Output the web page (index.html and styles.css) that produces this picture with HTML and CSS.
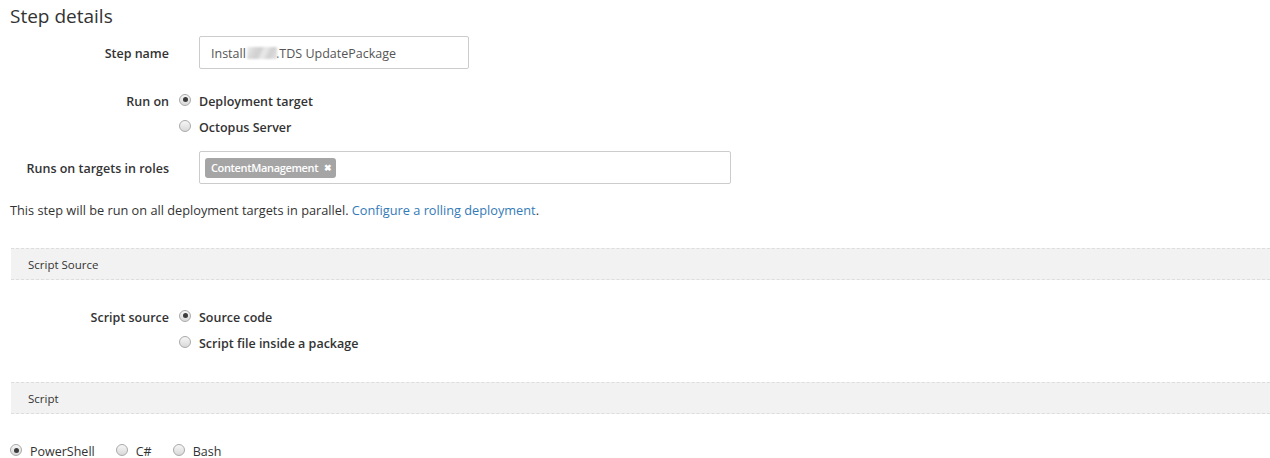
FILE: index.html
```html
<!DOCTYPE html>
<html>
<head>
<meta charset="utf-8">
<link rel="stylesheet" href="styles.css">
</head>
<body>
<div class="page">
  <h2 class="title">Step details</h2>

  <div class="row row-name">
    <div class="label">Step name</div>
    <div class="control control-input">
      <div class="input">Install <span class="blur"></span>.TDS UpdatePackage</div>
    </div>
  </div>

  <div class="row row-runon">
    <div class="label label-radio">Run on</div>
    <div class="control radios">
      <div class="radio"><span class="dot checked"></span><span class="rlabel">Deployment target</span></div>
      <div class="radio"><span class="dot"></span><span class="rlabel">Octopus Server</span></div>
    </div>
  </div>

  <div class="row row-roles">
    <div class="label">Runs on targets in roles</div>
    <div class="control control-input">
      <div class="input input-tags"><span class="tag">ContentManagement <span class="tag-x">&#x2716;</span></span></div>
    </div>
  </div>

  <p class="help">This step will be run on all deployment targets in parallel. <a class="link" href="#">Configure a rolling deployment</a>.</p>

  <div class="section-bar bar-source">Script Source</div>

  <div class="row row-source">
    <div class="label label-radio">Script source</div>
    <div class="control radios">
      <div class="radio"><span class="dot checked"></span><span class="rlabel">Source code</span></div>
      <div class="radio"><span class="dot"></span><span class="rlabel">Script file inside a package</span></div>
    </div>
  </div>

  <div class="section-bar bar-script">Script</div>

  <div class="inline-radios">
    <div class="radio plain"><span class="dot checked"></span><span class="rlabel">PowerShell</span></div>
    <div class="radio plain"><span class="dot"></span><span class="rlabel">C#</span></div>
    <div class="radio plain"><span class="dot"></span><span class="rlabel">Bash</span></div>
  </div>
</div>
</body>
</html>
```

FILE: styles.css
```css
html, body {
  margin: 0;
  padding: 0;
  background: #ffffff;
}

body {
  font-family: "Open Sans", "Noto Sans", "Liberation Sans", sans-serif;
  color: #333333;
  font-size: 12.5px;
}

.page {
  padding: 0 0 0 10px;
}

.title {
  margin: 0;
  height: 36px;
  line-height: 32px;
  font-size: 19px;
  font-weight: 400;
  color: #333333;
}

.row {
  display: flex;
  align-items: flex-start;
}

.label {
  width: 160px;
  height: 33px;
  flex: none;
  text-align: right;
  font-weight: 600;
  line-height: 33px;
  box-sizing: border-box;
  padding-right: 1px;
  padding-top: 1px;
}

.label-radio {
  line-height: 25px;
  height: 26px;
}

.control {
  padding-left: 9px;
}

.control-input {
  padding-left: 29px;
}

.row-name {
  height: 33px;
}

.input {
  box-sizing: border-box;
  height: 33px;
  width: 270px;
  border: 1px solid #cccccc;
  border-radius: 2px;
  padding: 1px 11px 0;
  line-height: 31px;
  color: #555555;
  white-space: nowrap;
}

.blur {
  display: inline-block;
  width: 30px;
  height: 12px;
  vertical-align: -1px;
  margin-left: -2px;
  margin-right: -1px;
  background: linear-gradient(115deg, #f2f2f2 0%, #dadada 20%, #cfcfcf 40%, #ebebeb 55%, #d0d0d0 75%, #e6e6e6 100%);
  filter: blur(0.8px);
}

.row-runon {
  margin-top: 19px;
}

.radios {
  display: flex;
  flex-direction: column;
}

.radio {
  display: flex;
  align-items: center;
  height: 26px;
  font-weight: 600;
  padding-top: 1px;
  box-sizing: border-box;
}

.dot {
  box-sizing: border-box;
  width: 12px;
  height: 12px;
  border-radius: 50%;
  border: 1px solid #a9a9a9;
  background: linear-gradient(#f6f6f6, #d9d9d9);
  margin-right: 8px;
  margin-top: -4px;
  position: relative;
  flex: none;
}

.dot.checked::after {
  content: "";
  position: absolute;
  left: 2.5px;
  top: 2.5px;
  width: 5px;
  height: 5px;
  border-radius: 50%;
  background: #3c3c3c;
}

.row-roles {
  margin-top: 11px;
  height: 33px;
}

.input-tags {
  width: 532px;
  padding: 0 5px;
  display: flex;
  align-items: center;
}

.tag {
  display: inline-block;
  background: #a5a5a5;
  color: #ffffff;
  font-size: 11px;
  font-weight: 600;
  line-height: 20px;
  height: 20px;
  padding: 0 5px 0 6px;
  border-radius: 3px;
  letter-spacing: -0.35px;
}

.tag-x {
  font-size: 9px;
  margin-left: 3px;
  position: relative;
  top: -1px;
}

.help {
  margin: 16px 0 0 0;
  line-height: 21px;
  height: 20px;
  font-size: 12.75px;
}

.link {
  color: #337ab7;
  text-decoration: none;
}

.section-bar {
  margin-left: 1px;
  height: 30px;
  line-height: 32px;
  border-top: 1px dashed #dddddd;
  border-bottom: 1px dashed #dddddd;
  background: #f2f2f2;
  padding-left: 17px;
  font-size: 11.5px;
  color: #333333;
}

.bar-source {
  margin-top: 28px;
}

.row-source {
  margin-top: 24px;
}

.bar-script {
  margin-top: 26px;
}

.inline-radios {
  margin-top: 24px;
  display: flex;
  gap: 0;
}

.radio.plain {
  font-weight: 400;
  margin-right: 21px;
}

.radio.plain .dot {
  margin-top: -3px;
}
```
